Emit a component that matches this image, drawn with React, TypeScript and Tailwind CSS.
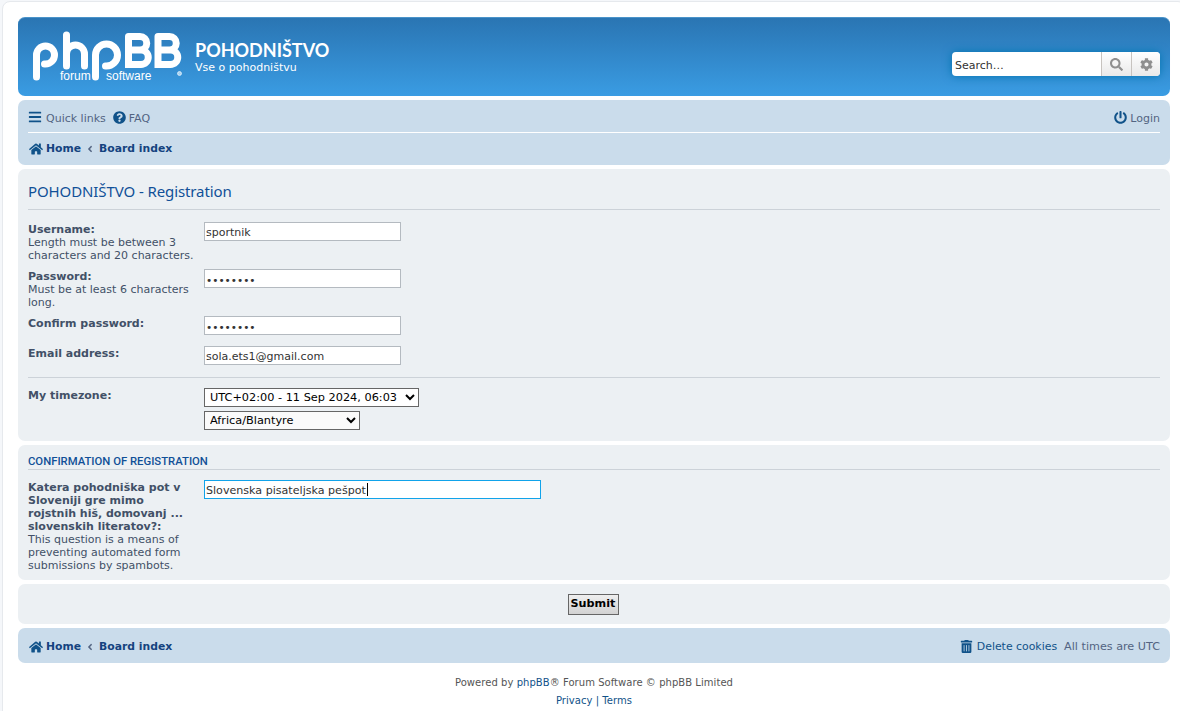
import { FaBars, FaQuestionCircle, FaPowerOff, FaHome, FaAngleLeft, FaSearch, FaCog, FaTrashAlt } from "react-icons/fa";

function Logo() {
  return (
    <svg width="160" height="60" viewBox="28 28 160 60" className="shrink-0">
      <g fill="none" stroke="#fff" strokeWidth="7" strokeLinecap="round">
        <path d="M36.5 77 V55 a9 9 0 1 1 9 9 h-1" />
        <path d="M66.5 35 V66 M66.5 54 a9 9 0 0 1 18 0 V66" />
        <path d="M95.5 77 V55 a11 11 0 1 1 11 11 h-1" />
        <path d="M128.5 36.5 H140 a6.75 6.75 0 0 1 0 13.5 H128.5 M141 50 a7.25 7.25 0 0 1 0 14.5 H128.5 V36.5" />
        <path d="M158 36.5 H169.5 a6.75 6.75 0 0 1 0 13.5 H158 M170.5 50 a7.25 7.25 0 0 1 0 14.5 H158 V36.5" />
      </g>
      <text x="60" y="80" fill="#fff" fontSize="12" fontFamily="Liberation Sans, sans-serif">forum</text>
      <text x="106" y="80" fill="#fff" fontSize="12" fontFamily="Liberation Sans, sans-serif">software</text>
      <circle cx="179.5" cy="73.5" r="2" fill="#a9d3f2" stroke="#fff" strokeWidth="0.6" />
    </svg>
  );
}

function Crumbs() {
  return (
    <div className="flex items-center font-bold text-[#15437f] text-[10.8px]">
      <FaHome className="text-[14px] text-[#105289] ml-px mr-[3px]" />
      <span className="pt-px">Home</span>
      <FaAngleLeft className="text-[10px] mx-[4px] text-[#536482]" />
      <span className="pt-px">Board index</span>
    </div>
  );
}

function Row({ label, hint, value, type = "text", className }: { label: string; hint?: string; value: string; type?: string; className: string }) {
  return (
    <div className={`flex ${className}`}>
      <div className="w-[176px] pt-px pr-2 text-[11px] leading-[13px] text-[#425067]">
        <div className="font-bold">{label}</div>
        {hint && <div className="w-[168px]">{hint}</div>}
      </div>
      <input
        readOnly
        type={type}
        value={value}
        className={`w-[197px] h-[19px] bg-white border border-[#b4bac0] pl-px pr-[2px] pt-[2px] text-[#333] outline-none ${type === "password" ? "text-[10.5px]" : "text-[11px]"}`}
      />
    </div>
  );
}

export default function App() {
  return (
    <div className="h-[711px] w-[1180px] overflow-hidden bg-[#f5f7fa] pt-px pl-[2px] font-['DejaVu_Sans',sans-serif] text-[11px] text-[#536482]">
      <div className="w-[1184px] h-[760px] bg-white border border-[#e6e9ed] rounded-lg p-[15px]">
        <div className="flex flex-col gap-1 w-[1152px]">
          {/* header */}
          <div className="h-[79px] rounded-[7px] border-t border-[#4a93c9] bg-gradient-to-b from-[#2a75b3] to-[#3a9ce3] flex pl-[10px] pr-[10px]">
            <div className="mt-[10px]">
              <Logo />
            </div>
            <div className="text-white ml-[7px] mt-[20px]">
              <div className="font-['Lato',sans-serif] font-bold text-[18px] leading-[24px]">POHODNIŠTVO</div>
              <div className="text-[11px] leading-[13px] -mt-[1px]">Vse o pohodništvu</div>
            </div>
            <div className="ml-auto mt-[34px] flex h-[24px] w-[208px] rounded-[4px] bg-white shadow-[0_0_10px_#0075b0]">
              <div className="flex-1 pl-[3px] pt-px leading-[25px] text-[11px] text-[#333]">Search…</div>
              <div className="w-[30px] border-l border-[#c7c3bf] bg-gradient-to-b from-white to-[#e9e9e9] flex items-center justify-center">
                <FaSearch className="text-[13px] text-[#8f8f8f]" />
              </div>
              <div className="w-[29px] border-l border-[#c7c3bf] rounded-r-[4px] bg-gradient-to-b from-white to-[#e9e9e9] flex items-center justify-center">
                <FaCog className="text-[13px] text-[#8f8f8f]" />
              </div>
            </div>
          </div>

          {/* nav */}
          <div className="h-[65px] rounded-[7px] bg-[#cadceb] px-[10px]">
            <div className="h-[33px] border-b border-white flex items-center pt-[2px] text-[#536482]">
              <FaBars className="text-[14px] text-[#105289] mr-[4px]" />
              <span className="pt-[5px]">Quick links</span>
              <FaQuestionCircle className="text-[13px] text-[#105289] ml-[7px] mr-[3px]" />
              <span className="pt-[5px]">FAQ</span>
              <div className="ml-auto flex items-center">
                <FaPowerOff className="text-[13px] text-[#105289] mr-[3px]" />
                <span className="pt-[5px]">Login</span>
              </div>
            </div>
            <div className="h-[31px] flex items-center">
              <Crumbs />
            </div>
          </div>

          {/* registration */}
          <div className="h-[272px] rounded-[7px] bg-[#ecf0f3] px-[10px]">
            <div className="h-[41px] border-b border-[#ccd2d8] pt-[11px] font-['Noto_Sans',sans-serif] text-[15px] tracking-[-0.1px] leading-[22px] text-[#115098]">
              POHODNIŠTVO - Registration
            </div>
            <Row className="mt-[12px] h-[47px]" label="Username:" hint="Length must be between 3 characters and 20 characters." value="sportnik" />
            <Row className="h-[47px]" type="password" label="Password:" hint="Must be at least 6 characters long." value="abcdefgh" />
            <Row className="h-[30px]" type="password" label="Confirm password:" value="abcdefgh" />
            <Row className="h-[31px]" label="Email address:" value="sola.ets1@gmail.com" />
            <div className="border-t border-[#ccd2d8] pt-[10px] flex">
              <div className="w-[176px] pt-px text-[11px] leading-[13px] font-bold text-[#425067]">My timezone:</div>
              <div className="flex flex-col gap-1 items-start">
                <select className="w-[215px] h-[19px] bg-white border border-[#666] text-[11.3px] text-black pl-[1px]" defaultValue="a">
                  <option value="a">UTC+02:00 - 11 Sep 2024, 06:03</option>
                </select>
                <select className="w-[156px] h-[19px] bg-[#fafafa] border border-[#666] text-[11.3px] text-black pl-[1px]" defaultValue="a">
                  <option value="a">Africa/Blantyre</option>
                </select>
              </div>
            </div>
          </div>

          {/* confirmation */}
          <div className="h-[135px] rounded-[7px] bg-[#ecf0f3] px-[10px]">
            <div className="h-[25px] border-b border-[#ccd2d8] pt-[10px] font-['Roboto',sans-serif] font-medium text-[11.3px] leading-[14px] text-[#115098]">
              CONFIRMATION OF REGISTRATION
            </div>
            <div className="flex mt-[10px]">
              <div className="w-[176px] pt-px text-[11px] leading-[13px] text-[#425067]">
                <div className="font-bold w-[156px]">Katera pohodniška pot v Sloveniji gre mimo rojstnih hiš, domovanj ... slovenskih literatov?:</div>
                <div className="w-[156px]">This question is a means of preventing automated form submissions by spambots.</div>
              </div>
              <div className="relative h-[19px]">
                <input
                  readOnly
                  value="Slovenska pisateljska pešpot"
                  className="w-[337px] h-[19px] bg-white border border-[#11a3ea] pl-px pr-[2px] pt-[2px] text-[11.1px] text-[#333] outline-none"
                />
                <span className="absolute left-[163px] top-[3px] h-[13px] w-px bg-black" />
              </div>
            </div>
          </div>

          {/* submit */}
          <div className="h-[40px] rounded-[7px] bg-[#ecf0f3] flex items-center justify-center pt-px pr-[2px]">
            <button className="w-[51px] h-[21px] border border-[#666] bg-gradient-to-b from-[#efefef] to-[#d2d2d2] text-[11.2px] font-bold text-black">
              Submit
            </button>
          </div>

          {/* bottom nav */}
          <div className="h-[35px] rounded-[7px] bg-[#cadceb] px-[10px] flex items-center pt-[2px]">
            <Crumbs />
            <div className="ml-auto flex items-center">
              <FaTrashAlt className="text-[13px] text-[#105289] mr-[4px]" />
              <span className="text-[#105289] text-[10.9px] pt-px">Delete cookies</span>
              <span className="ml-[7px] text-[11.2px] pt-px">All times are UTC</span>
            </div>
          </div>

          {/* copyright */}
          <div className="text-center text-[10px] leading-[18px] text-[#555] pt-[7px] tracking-[0.05px]">
            <div>
              Powered by <span className="text-[#105289]">phpBB</span>® Forum Software © phpBB Limited
            </div>
            <div className="text-[#105289]">Privacy | Terms</div>
          </div>
        </div>
      </div>
    </div>
  );
}
